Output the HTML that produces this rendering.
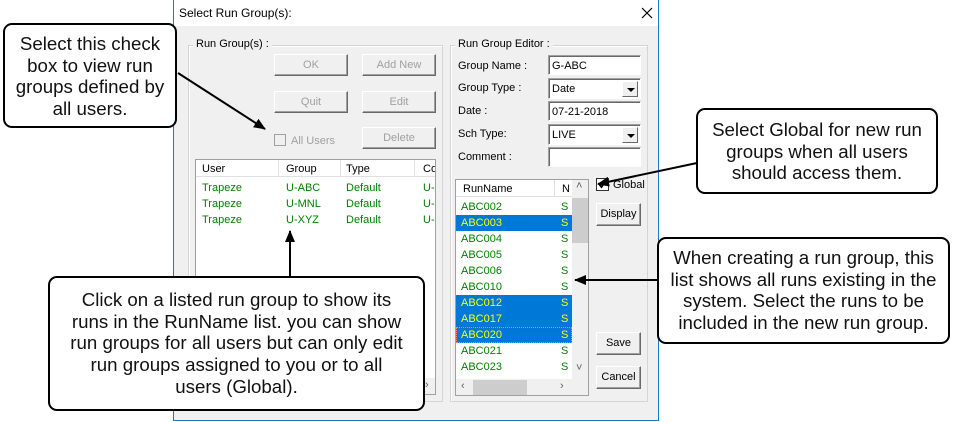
<!DOCTYPE html>
<html><head><style>
*{box-sizing:border-box;margin:0;padding:0}
body{width:953px;height:422px;background:#fff;position:relative;overflow:hidden;font-family:"Liberation Sans",Arial,sans-serif}
.a{position:absolute}
.dlg{left:173px;top:0;width:486px;height:421px;background:#f0f0f0;border-left:1px solid #1979ca;border-right:1px solid #1979ca;border-bottom:1px solid #1979ca}
.t{font-size:11px;color:#000;white-space:nowrap}
.grp{border:1px solid #d5d5d5;box-shadow:inset 1px 1px 0 #fff}
.btn{background:#f0f0f0;border:1px solid;border-color:#fff #696969 #696969 #fff;box-shadow:inset -1px -1px 0 #a0a0a0;font-size:11px;text-align:center;line-height:20px}
.dis{color:#a0a0a0}
.inp{background:#fff;border:1px solid;border-color:#a0a0a0 #fff #fff #a0a0a0;box-shadow:inset 1px 1px 0 #696969;font-size:11px;padding:3px 3px 1px;line-height:14px}
.dd{position:absolute;right:2px;top:2px;width:16px;height:16px;background:#f0f0f0;border:1px solid;border-color:#fff #696969 #696969 #fff}
.dd:after{content:"";position:absolute;left:4px;top:6px;border-left:4px solid transparent;border-right:4px solid transparent;border-top:4px solid #000}
.g{color:#008000}
.row{position:absolute;left:0;height:16px;font-size:11px;line-height:17px}
.sel{background:#0078d7;color:#ffff00}
.co{position:absolute;background:#fff;border:2px solid #000;border-radius:9px;font-size:18.7px;text-align:center;line-height:21.7px;color:#111;white-space:nowrap}
</style></head><body>
<div class="a dlg">
 <div class="a" style="left:0;top:0;width:484px;height:26px;background:#fff"></div>
 <div class="a t" style="left:5px;top:6px;font-size:12px">Select Run Group(s):</div>
 <svg class="a" style="left:467px;top:7px" width="12" height="12"><path d="M1 1L11 11M11 1L1 11" stroke="#000" stroke-width="1.2"/></svg>
</div>
<div class="a grp" style="left:188px;top:45px;width:255px;height:357px"></div>
<div class="a t" style="left:193px;top:38px;background:#f0f0f0;padding:0 3px">Run Group(s) :</div>
<div class="a btn dis" style="left:274px;top:54px;width:74px;height:22px">OK</div>
<div class="a btn dis" style="left:362px;top:54px;width:74px;height:22px">Add New</div>
<div class="a btn dis" style="left:274px;top:91px;width:74px;height:22px">Quit</div>
<div class="a btn dis" style="left:362px;top:91px;width:74px;height:22px">Edit</div>
<div class="a btn dis" style="left:362px;top:127px;width:74px;height:22px">Delete</div>
<div class="a" style="left:274px;top:134px;width:12px;height:12px;border:1px solid #a0a0a0;background:#f0f0f0"></div>
<div class="a t dis" style="left:291px;top:135px">All Users</div>
<div class="a" style="left:195px;top:159px;width:241px;height:236px;background:#fff;border:1px solid #a0a0a0;overflow:hidden">
 <div class="a" style="left:0;top:0;width:240px;height:17px;border-bottom:1px solid #e0e0e0"></div>
 <div class="a t" style="left:6px;top:3px">User</div><div class="a" style="left:82px;top:0;width:1px;height:16px;background:#e0e0e0"></div>
 <div class="a t" style="left:90px;top:3px">Group</div><div class="a" style="left:144px;top:0;width:1px;height:16px;background:#e0e0e0"></div>
 <div class="a t" style="left:150px;top:3px">Type</div><div class="a" style="left:218px;top:0;width:1px;height:16px;background:#e0e0e0"></div>
 <div class="a t" style="left:227px;top:3px">Co</div>
 <div class="a t g" style="left:6px;top:22px">Trapeze</div><div class="a t g" style="left:90px;top:22px">U-ABC</div><div class="a t g" style="left:150px;top:22px">Default</div><div class="a t g" style="left:227px;top:22px">U-A</div>
 <div class="a t g" style="left:6px;top:38px">Trapeze</div><div class="a t g" style="left:90px;top:38px">U-MNL</div><div class="a t g" style="left:150px;top:38px">Default</div><div class="a t g" style="left:227px;top:38px">U-N</div>
 <div class="a t g" style="left:6px;top:54px">Trapeze</div><div class="a t g" style="left:90px;top:54px">U-XYZ</div><div class="a t g" style="left:150px;top:54px">Default</div><div class="a t g" style="left:227px;top:54px">U-X</div>
 <div class="a" style="left:0;top:218px;width:240px;height:17px;background:#f0f0f0"></div>
 <div class="a t" style="left:229px;top:219px;color:#606060">›</div>
</div>
<div class="a grp" style="left:450px;top:45px;width:198px;height:357px"></div>
<div class="a t" style="left:455px;top:38px;background:#f0f0f0;padding:0 3px">Run Group Editor :</div>
<div class="a t" style="left:458px;top:60px">Group Name :</div>
<div class="a t" style="left:458px;top:82px">Group Type :</div>
<div class="a t" style="left:458px;top:105px">Date :</div>
<div class="a t" style="left:458px;top:128px">Sch Type:</div>
<div class="a t" style="left:458px;top:151px">Comment :</div>
<div class="a inp" style="left:548px;top:55px;width:93px;height:20px">G-ABC</div>
<div class="a inp" style="left:548px;top:78px;width:93px;height:21px">Date<div class="dd"></div></div>
<div class="a inp" style="left:548px;top:101px;width:93px;height:20px">07-21-2018</div>
<div class="a inp" style="left:548px;top:124px;width:93px;height:21px">LIVE<div class="dd"></div></div>
<div class="a inp" style="left:548px;top:147px;width:93px;height:20px"></div>
<div class="a" style="left:455px;top:179px;width:134px;height:217px;background:#fff;border:1px solid #a0a0a0;overflow:hidden">
 <div class="a" style="left:0;top:0;width:116px;height:17px;border-bottom:1px solid #e0e0e0"></div>
 <div class="a t" style="left:7px;top:3px">RunName</div><div class="a" style="left:98px;top:0;width:1px;height:16px;background:#e0e0e0"></div>
 <div class="a t" style="left:106px;top:3px">N</div>
 <div class="row g" style="top:19px;width:116px;padding-left:5px">ABC002<span style="position:absolute;left:105px">S</span></div>
 <div class="row sel" style="top:35px;width:116px;padding-left:5px">ABC003<span style="position:absolute;left:105px">S</span></div>
 <div class="row g" style="top:51px;width:116px;padding-left:5px">ABC004<span style="position:absolute;left:105px">S</span></div>
 <div class="row g" style="top:67px;width:116px;padding-left:5px">ABC005<span style="position:absolute;left:105px">S</span></div>
 <div class="row g" style="top:83px;width:116px;padding-left:5px">ABC006<span style="position:absolute;left:105px">S</span></div>
 <div class="row g" style="top:99px;width:116px;padding-left:5px">ABC010<span style="position:absolute;left:105px">S</span></div>
 <div class="row sel" style="top:115px;width:116px;padding-left:5px">ABC012<span style="position:absolute;left:105px">S</span></div>
 <div class="row sel" style="top:131px;width:116px;padding-left:5px">ABC017<span style="position:absolute;left:105px">S</span></div>
 <div class="row sel" style="top:147px;width:116px;padding-left:5px;outline:1px dotted #ff8080;outline-offset:-1px">ABC020<span style="position:absolute;left:105px">S</span></div>
 <div class="row g" style="top:163px;width:116px;padding-left:5px">ABC021<span style="position:absolute;left:105px">S</span></div>
 <div class="row g" style="top:179px;width:116px;padding-left:5px">ABC023<span style="position:absolute;left:105px">S</span></div>
 <div class="a" style="left:116px;top:0;width:17px;height:199px;background:#f0f0f0"></div>
 <div class="a" style="left:116px;top:18px;width:16px;height:45px;background:#cdcdcd"></div>
 <div class="a t" style="left:120px;top:0px;color:#606060">˄</div>
 <div class="a t" style="left:120px;top:182px;color:#606060">˅</div>
 <div class="a" style="left:0;top:199px;width:133px;height:17px;background:#f0f0f0"></div>
 <div class="a" style="left:17px;top:200px;width:54px;height:15px;background:#cdcdcd"></div>
 <div class="a t" style="left:5px;top:200px;color:#606060">‹</div>
 <div class="a t" style="left:104px;top:200px;color:#606060">›</div>
</div>
<div class="a" style="left:596px;top:178px;width:13px;height:13px;border:1px solid #333;background:#fff"></div>
<svg class="a" style="left:597px;top:179px" width="11" height="11"><path d="M2 5L4.5 8L9 2" stroke="#000" stroke-width="1.8" fill="none"/></svg>
<div class="a t" style="left:613px;top:179px">Global</div>
<div class="a btn" style="left:596px;top:203px;width:45px;height:23px">Display</div>
<div class="a btn" style="left:596px;top:332px;width:45px;height:23px">Save</div>
<div class="a btn" style="left:596px;top:366px;width:45px;height:23px">Cancel</div>
<div class="co" style="left:3px;top:23px;width:174px;height:105px;padding-top:8px">Select this check<br>box to view run<br>groups defined by<br>all users.</div>
<div class="co" style="left:696px;top:108px;width:242px;height:86px;padding-top:9px">Select Global for new run<br>groups when all users<br>should access them.</div>
<div class="co" style="left:657px;top:237px;width:293px;height:107px;padding-top:8px">When creating a run group, this<br>list shows all runs existing in the<br>system. Select the runs to be<br>included in the new run group.</div>
<div class="co" style="left:48px;top:276px;width:377px;height:135px;padding-top:11px">Click on a listed run group to show its<br>runs in the RunName list. you can show<br>run groups for all users but can only edit<br>run groups assigned to you or to all<br>users (Global).</div>
<svg class="a" style="left:0;top:0" width="953" height="422">
<defs><marker id="m2" markerWidth="12" markerHeight="10" refX="11" refY="5" orient="auto" markerUnits="userSpaceOnUse"><path d="M0 0L12 5L0 10z" fill="#000"/></marker></defs>
<path d="M178 73L265 129" stroke="#000" stroke-width="2" marker-end="url(#m2)"/>
<path d="M697 163L598 184" stroke="#000" stroke-width="2" marker-end="url(#m2)"/>
<path d="M657 280L575 280" stroke="#000" stroke-width="2" marker-end="url(#m2)"/>
<path d="M290 277L290 231" stroke="#000" stroke-width="2" marker-end="url(#m2)"/>
</svg>
</body></html>
